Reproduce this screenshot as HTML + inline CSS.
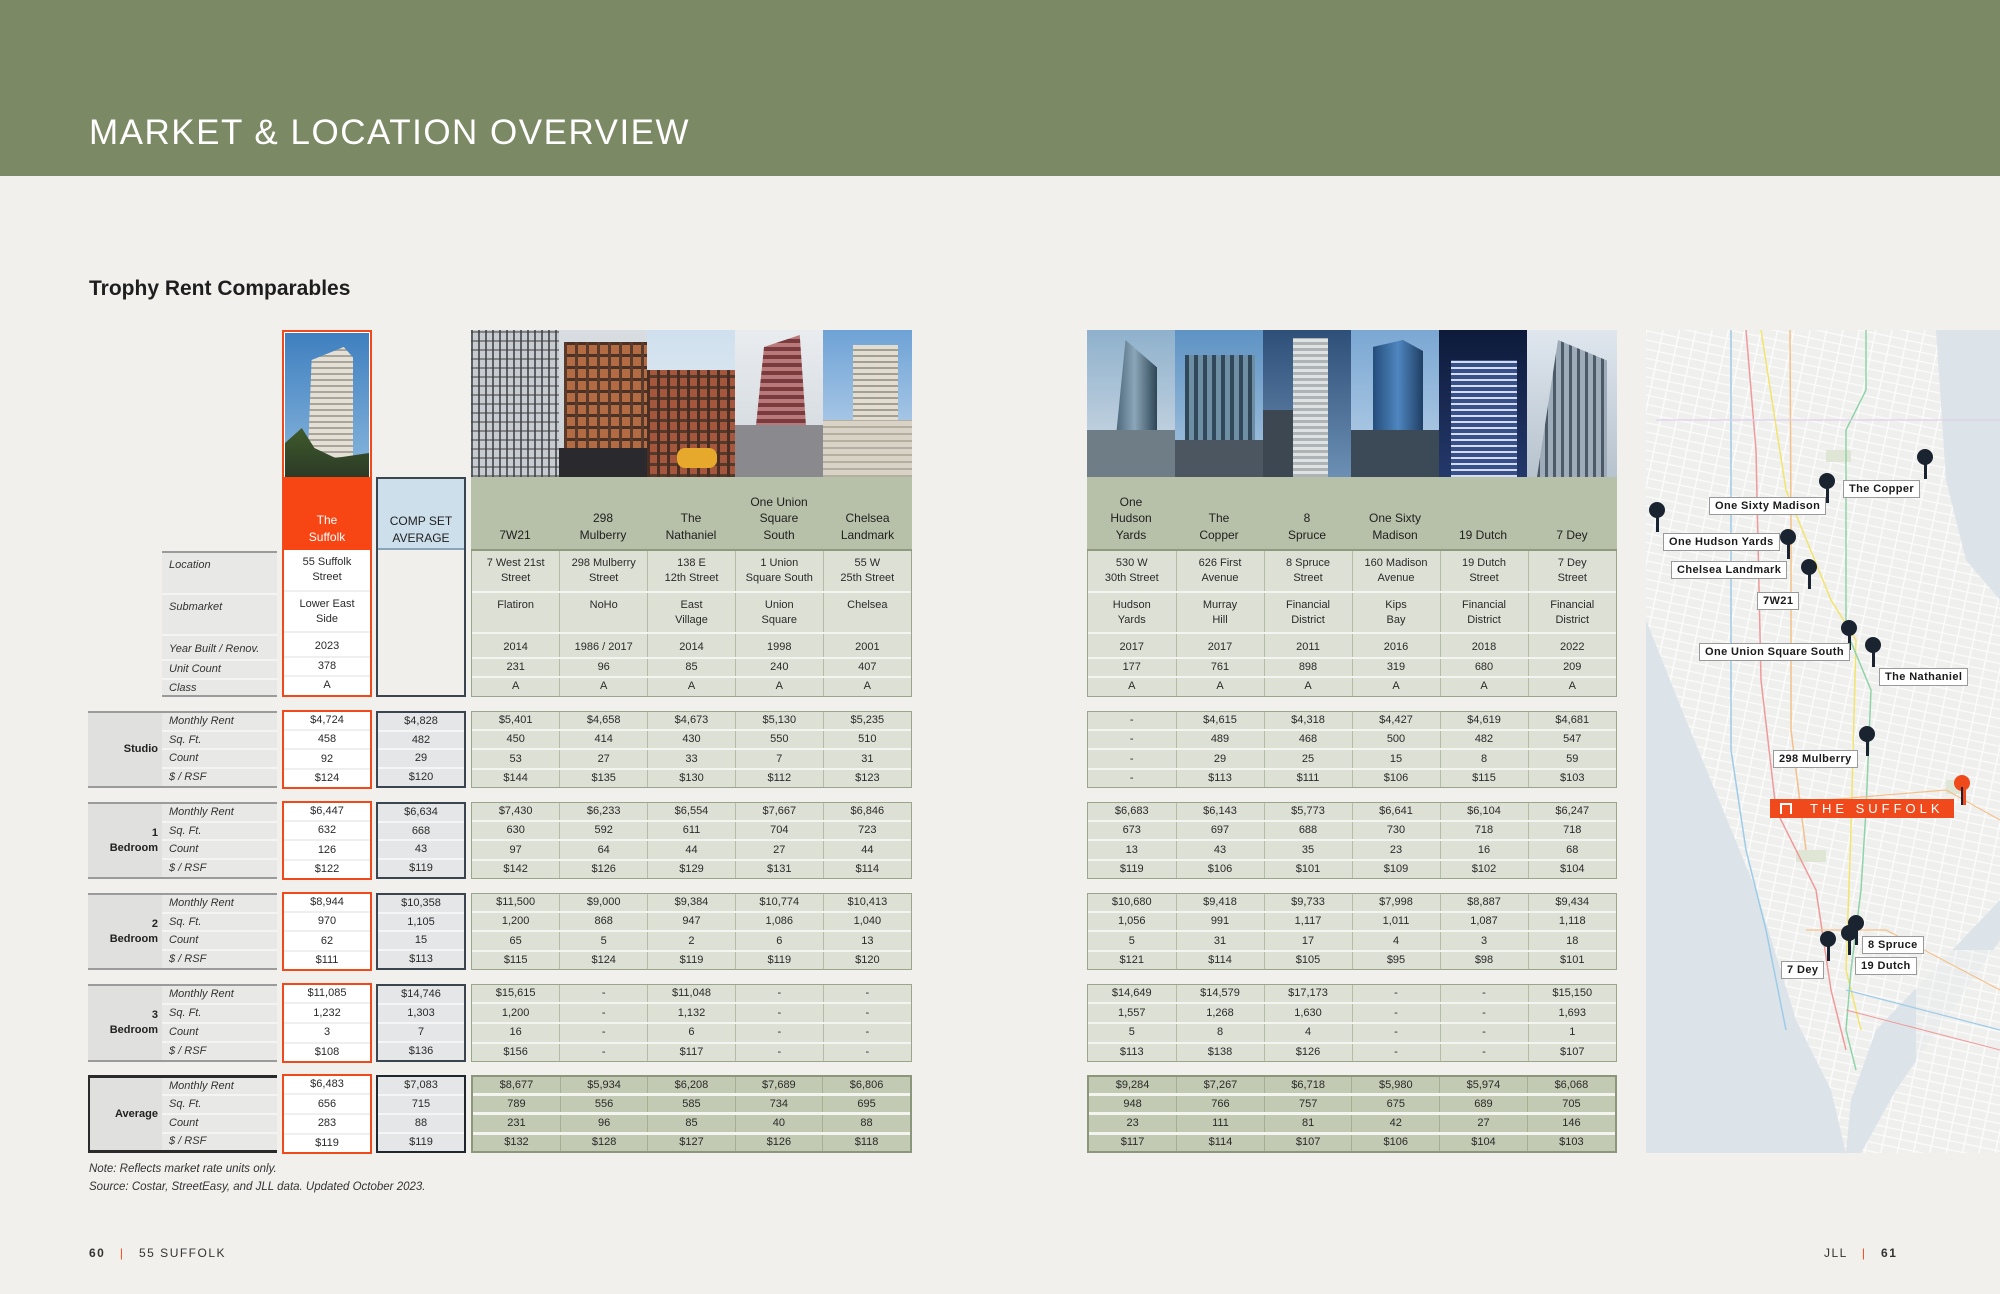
<!DOCTYPE html>
<html><head><meta charset="utf-8">
<style>
*{margin:0;padding:0;box-sizing:border-box}
body{width:2000px;height:1294px;background:#f1f0ec;font-family:"Liberation Sans",sans-serif;position:relative;overflow:hidden;color:#2a2a2a}
.hdr{position:absolute;left:0;top:0;width:2000px;height:176px;background:#7b8964}
.hdr h1{position:absolute;left:89px;top:113px;font-weight:normal;font-size:35px;letter-spacing:1.5px;color:#fff}
h2{position:absolute;left:89px;top:277px;font-size:21px;font-weight:bold;color:#1e1e1e}
.b{position:absolute}
table{border-collapse:collapse;width:100%;height:100%;table-layout:fixed}
td{text-align:center;font-size:11px;padding:0;line-height:15px;vertical-align:middle}
.g td{background:#dde0d5;border-left:1px solid #b4bca6;border-top:2px solid #f3f3f0}
.g{border:1.5px solid #9aa68b;background:#dde0d5}
.g tr:first-child td{border-top:none}
.g td:first-child{border-left:none}
.ga td{background:#c3cab4;border-left:1px solid #a4ae92;border-top:3px solid #f3f3f0}
.ga{border:2px solid #8a977a;background:#c3cab4}
.ga tr:first-child td{border-top:none}
.ga td:first-child{border-left:none}
.s{border:2.5px solid #f04a1c;background:#fff}
.s td{background:#fff;border-top:2px solid #efefed}
.s tr:first-child td{border-top:none}
.a{border:2px solid #3b4550;background:#e5e6e7}
.a td{border-top:2px solid #f5f5f5}
.a tr:first-child td{border-top:none}
.l{border-top:2px solid #9b9b9b;border-bottom:2px solid #9b9b9b;background:#e8e8e6}
.l td{text-align:left;font-style:italic;padding-left:7px;border-top:2px solid #f4f4f2;color:#333}
.l tr:first-child td{border-top:none}
.l td.cat{font-style:normal;font-weight:bold;text-align:right;padding-right:4px;padding-left:0;background:#e0e0de;border-top:none;color:#222}
.lav{border-top:3px solid #2b2b2b;border-bottom:3px solid #2b2b2b;border-left:2px solid #2b2b2b}
.top td{vertical-align:top;padding-top:5px}
.ph{position:absolute;overflow:hidden}
.gh{position:absolute;background:#b7c0a8;border-bottom:2px solid #8d9a7e}
.gh div{position:absolute;bottom:6px;text-align:center;font-size:12px;line-height:16.5px;color:#1f1f1f}
.pin{position:absolute;width:16px;height:16px;border-radius:50%;background:#1a2430}
.pin:after{content:"";position:absolute;left:7px;top:12px;width:2.5px;height:18px;background:#1a2430}
.lab{position:absolute;background:#fff;border:1.5px solid #9a9a9a;font-size:11px;font-weight:bold;letter-spacing:.4px;color:#1a1a1a;line-height:16px;padding:0 5px;white-space:nowrap}
.note{position:absolute;left:89px;font-size:11.5px;font-style:italic;color:#333}
.ft{position:absolute;top:1246px;font-size:12px;letter-spacing:1.5px;color:#333}
</style></head><body>
<div class="hdr"><h1>MARKET &amp; LOCATION OVERVIEW</h1></div>
<h2>Trophy Rent Comparables</h2>

<div class="b" style="left:282px;top:330px;width:90px;height:367px;border:2.5px solid #f04a1c;background:#fff"></div>
<div class="ph" style="left:285px;top:333px;width:84px;height:144px;background:linear-gradient(#3f7fbf,#8ab8de)">
 <div style="position:absolute;left:22px;top:14px;width:46px;height:130px;background:repeating-linear-gradient(0deg,#a9a59c 0 2px,#e4e0d6 2px 6px);clip-path:polygon(10% 10%,80% 0,100% 8%,100% 100%,0 100%)"></div>
 <div style="position:absolute;left:0;top:95px;width:84px;height:50px;background:linear-gradient(#3f5a2c,#2b3a26);clip-path:polygon(0 30%,20% 0,35% 40%,60% 60%,100% 50%,100% 100%,0 100%)"></div>
</div>
<div class="b" style="left:284px;top:477px;width:86px;height:73px;background:#f74514;color:#fff;font-size:12px;line-height:16.5px;text-align:center;padding-top:35px">The<br>Suffolk</div>
<div class="b" style="left:284px;top:550px;width:86px;height:145px">
<table class="top"><tr style="height:41px"><td>55 Suffolk<br>Street</td></tr><tr style="height:41px"><td style="border-top:2px solid #efefed">Lower East<br>Side</td></tr><tr style="height:25px"><td style="border-top:2px solid #efefed;padding-top:6px">2023</td></tr><tr style="height:19px"><td style="border-top:2px solid #efefed;padding-top:1px">378</td></tr><tr><td style="border-top:2px solid #efefed;padding-top:1px">A</td></tr></table></div>

<div class="b" style="left:376px;top:477px;width:90px;height:220px;border:2px solid #3b4550;background:#f0efeb"></div>
<div class="b" style="left:378px;top:479px;width:86px;height:71px;background:#cddfeb;border-bottom:2px solid #8aa4b8;font-size:12px;line-height:16.5px;text-align:center;padding-top:34px;color:#1f1f1f">COMP SET<br>AVERAGE</div>

<div class="b l" style="left:162px;top:551px;width:115px;height:146px">
<table class="top"><tr style="height:41px"><td>Location</td></tr><tr style="height:41px"><td>Submarket</td></tr><tr style="height:25px"><td style="padding-top:6px">Year Built / Renov.</td></tr><tr style="height:19px"><td style="padding-top:1px">Unit Count</td></tr><tr><td style="padding-top:1px">Class</td></tr></table></div>

<div class="ph" style="left:471px;top:330px;width:88px;height:147px;background:repeating-linear-gradient(90deg,#5b6066 0 2px,#c8ccd0 2px 7px),#aab;"><div style="position:absolute;inset:0;background:repeating-linear-gradient(0deg,rgba(60,60,60,.5) 0 2px,transparent 2px 9px)"></div></div>
<div class="ph" style="left:559px;top:330px;width:88px;height:147px;background:linear-gradient(#d8dde2,#c9ced2)"><div style="position:absolute;left:5px;top:12px;width:83px;height:135px;background:repeating-linear-gradient(90deg,#5a3a2a 0 3px,transparent 3px 11px),repeating-linear-gradient(0deg,#4a3226 0 3px,transparent 3px 12px),#b26b43"></div><div style="position:absolute;left:0;top:118px;width:88px;height:29px;background:#2a2a2e"></div></div>
<div class="ph" style="left:647px;top:330px;width:88px;height:147px;background:linear-gradient(#cfe0ee,#e8eef2)"><div style="position:absolute;left:0;top:40px;width:88px;height:107px;background:repeating-linear-gradient(90deg,#4a2e24 0 3px,transparent 3px 10px),repeating-linear-gradient(0deg,#553a2c 0 3px,transparent 3px 11px),#a5573e"></div><div style="position:absolute;left:30px;top:118px;width:40px;height:20px;border-radius:8px;background:#e6a92c"></div></div>
<div class="ph" style="left:735px;top:330px;width:88px;height:147px;background:linear-gradient(#e9ecef,#cfd6dc)"><div style="position:absolute;left:18px;top:5px;width:55px;height:120px;background:repeating-linear-gradient(0deg,#7a3b3e 0 4px,#b9787a 4px 8px);clip-path:polygon(20% 10%,85% 0,100% 100%,0 100%)"></div><div style="position:absolute;left:0;top:95px;width:88px;height:52px;background:#8a8a8e"></div></div>
<div class="ph" style="left:823px;top:330px;width:89px;height:147px;background:linear-gradient(#6ea2d6,#c7dbee)"><div style="position:absolute;left:30px;top:15px;width:45px;height:132px;background:repeating-linear-gradient(0deg,#a49e92 0 2px,#e2ddd1 2px 6px)"></div><div style="position:absolute;left:0;top:90px;width:89px;height:57px;background:repeating-linear-gradient(0deg,#b4ae9f 0 2px,#d8d3c6 2px 7px)"></div></div>
<div class="gh" style="left:471px;top:477px;width:441px;height:74px">
 <div style="left:0;width:88px">7W21</div><div style="left:88px;width:88px">298<br>Mulberry</div><div style="left:176px;width:88px">The<br>Nathaniel</div><div style="left:264px;width:88px">One Union<br>Square<br>South</div><div style="left:352px;width:89px">Chelsea<br>Landmark</div>
</div>
<div class="b g" style="left:471px;top:551px;width:441px;height:146px;border-top:none">
<table class="top"><tr style="height:41px"><td>7 West 21st<br>Street</td><td>298 Mulberry<br>Street</td><td>138 E<br>12th Street</td><td>1 Union<br>Square South</td><td>55 W<br>25th Street</td></tr>
<tr style="height:41px"><td>Flatiron</td><td>NoHo</td><td>East<br>Village</td><td>Union<br>Square</td><td>Chelsea</td></tr>
<tr style="height:25px"><td style="padding-top:6px">2014</td><td style="padding-top:6px">1986 / 2017</td><td style="padding-top:6px">2014</td><td style="padding-top:6px">1998</td><td style="padding-top:6px">2001</td></tr>
<tr style="height:19px"><td style="padding-top:1px">231</td><td style="padding-top:1px">96</td><td style="padding-top:1px">85</td><td style="padding-top:1px">240</td><td style="padding-top:1px">407</td></tr>
<tr><td style="padding-top:1px">A</td><td style="padding-top:1px">A</td><td style="padding-top:1px">A</td><td style="padding-top:1px">A</td><td style="padding-top:1px">A</td></tr></table></div>

<div class="ph" style="left:1087px;top:330px;width:88px;height:147px;background:linear-gradient(#8fb1cc,#d3dde6)"><div style="position:absolute;left:25px;top:10px;width:45px;height:137px;background:linear-gradient(90deg,#3f5a6c,#8aa6b8,#2f4656);clip-path:polygon(30% 0,100% 20%,100% 100%,0 100%)"></div><div style="position:absolute;left:0;top:100px;width:88px;height:47px;background:#6f7d86"></div></div>
<div class="ph" style="left:1175px;top:330px;width:88px;height:147px;background:linear-gradient(#5e93c4,#a9c6e0)"><div style="position:absolute;left:10px;top:25px;width:70px;height:122px;background:repeating-linear-gradient(90deg,#30485a 0 4px,#6d8ea3 4px 9px)"></div><div style="position:absolute;left:0;top:110px;width:88px;height:37px;background:#4b5660"></div></div>
<div class="ph" style="left:1263px;top:330px;width:88px;height:147px;background:linear-gradient(#2e4f78,#6c8fb4)"><div style="position:absolute;left:30px;top:8px;width:35px;height:139px;background:repeating-linear-gradient(0deg,#aeb3b5 0 3px,#dfe2e3 3px 6px)"></div><div style="position:absolute;left:0;top:80px;width:30px;height:67px;background:#3d4752"></div></div>
<div class="ph" style="left:1351px;top:330px;width:88px;height:147px;background:linear-gradient(#7aa7d3,#bad2e8)"><div style="position:absolute;left:22px;top:10px;width:50px;height:137px;background:linear-gradient(90deg,#244d7a,#4f86c0,#1f3e63);clip-path:polygon(0 5%,60% 0,100% 8%,100% 100%,0 100%)"></div><div style="position:absolute;left:0;top:100px;width:88px;height:47px;background:#3c4a58"></div></div>
<div class="ph" style="left:1439px;top:330px;width:88px;height:147px;background:linear-gradient(#0d1a3a,#24386a)"><div style="position:absolute;left:12px;top:30px;width:66px;height:117px;background:repeating-linear-gradient(0deg,#d5dcf0 0 2px,#37508a 2px 6px)"></div></div>
<div class="ph" style="left:1527px;top:330px;width:90px;height:147px;background:linear-gradient(#dfe6ee,#b7c3ce)"><div style="position:absolute;left:10px;top:10px;width:70px;height:137px;background:repeating-linear-gradient(90deg,#4c5a68 0 3px,#9eabb8 3px 8px);clip-path:polygon(30% 0,100% 15%,100% 100%,0 100%)"></div></div>
<div class="gh" style="left:1087px;top:477px;width:530px;height:74px">
 <div style="left:0;width:88px">One<br>Hudson<br>Yards</div><div style="left:88px;width:88px">The<br>Copper</div><div style="left:176px;width:88px">8<br>Spruce</div><div style="left:264px;width:88px">One Sixty<br>Madison</div><div style="left:352px;width:88px">19 Dutch</div><div style="left:440px;width:90px">7 Dey</div>
</div>
<div class="b g" style="left:1087px;top:551px;width:530px;height:146px;border-top:none">
<table class="top"><tr style="height:41px"><td>530 W<br>30th Street</td><td>626 First<br>Avenue</td><td>8 Spruce<br>Street</td><td>160 Madison<br>Avenue</td><td>19 Dutch<br>Street</td><td>7 Dey<br>Street</td></tr>
<tr style="height:41px"><td>Hudson<br>Yards</td><td>Murray<br>Hill</td><td>Financial<br>District</td><td>Kips<br>Bay</td><td>Financial<br>District</td><td>Financial<br>District</td></tr>
<tr style="height:25px"><td style="padding-top:6px">2017</td><td style="padding-top:6px">2017</td><td style="padding-top:6px">2011</td><td style="padding-top:6px">2016</td><td style="padding-top:6px">2018</td><td style="padding-top:6px">2022</td></tr>
<tr style="height:19px"><td style="padding-top:1px">177</td><td style="padding-top:1px">761</td><td style="padding-top:1px">898</td><td style="padding-top:1px">319</td><td style="padding-top:1px">680</td><td style="padding-top:1px">209</td></tr>
<tr><td style="padding-top:1px">A</td><td style="padding-top:1px">A</td><td style="padding-top:1px">A</td><td style="padding-top:1px">A</td><td style="padding-top:1px">A</td><td style="padding-top:1px">A</td></tr></table></div>

<div class="b l" style="left:88px;top:711px;width:189px;height:77px"><table><col style="width:74px"><col><tr><td class="cat" rowspan="4">Studio</td><td>Monthly Rent</td></tr><tr><td>Sq. Ft.</td></tr><tr><td>Count</td></tr><tr><td>$ / RSF</td></tr></table></div>
<div class="b s" style="left:282px;top:710px;width:90px;height:79px"><table><tr><td>$4,724</td></tr><tr><td>458</td></tr><tr><td>92</td></tr><tr><td>$124</td></tr></table></div>
<div class="b a" style="left:376px;top:711px;width:90px;height:77px"><table><tr><td>$4,828</td></tr><tr><td>482</td></tr><tr><td>29</td></tr><tr><td>$120</td></tr></table></div>
<div class="b g" style="left:471px;top:711px;width:441px;height:77px"><table><tr><td>$5,401</td><td>$4,658</td><td>$4,673</td><td>$5,130</td><td>$5,235</td></tr><tr><td>450</td><td>414</td><td>430</td><td>550</td><td>510</td></tr><tr><td>53</td><td>27</td><td>33</td><td>7</td><td>31</td></tr><tr><td>$144</td><td>$135</td><td>$130</td><td>$112</td><td>$123</td></tr></table></div>
<div class="b g" style="left:1087px;top:711px;width:530px;height:77px"><table><tr><td>-</td><td>$4,615</td><td>$4,318</td><td>$4,427</td><td>$4,619</td><td>$4,681</td></tr><tr><td>-</td><td>489</td><td>468</td><td>500</td><td>482</td><td>547</td></tr><tr><td>-</td><td>29</td><td>25</td><td>15</td><td>8</td><td>59</td></tr><tr><td>-</td><td>$113</td><td>$111</td><td>$106</td><td>$115</td><td>$103</td></tr></table></div>

<div class="b l" style="left:88px;top:802px;width:189px;height:77px"><table><col style="width:74px"><col><tr><td class="cat" rowspan="4">1<br>Bedroom</td><td>Monthly Rent</td></tr><tr><td>Sq. Ft.</td></tr><tr><td>Count</td></tr><tr><td>$ / RSF</td></tr></table></div>
<div class="b s" style="left:282px;top:801px;width:90px;height:79px"><table><tr><td>$6,447</td></tr><tr><td>632</td></tr><tr><td>126</td></tr><tr><td>$122</td></tr></table></div>
<div class="b a" style="left:376px;top:802px;width:90px;height:77px"><table><tr><td>$6,634</td></tr><tr><td>668</td></tr><tr><td>43</td></tr><tr><td>$119</td></tr></table></div>
<div class="b g" style="left:471px;top:802px;width:441px;height:77px"><table><tr><td>$7,430</td><td>$6,233</td><td>$6,554</td><td>$7,667</td><td>$6,846</td></tr><tr><td>630</td><td>592</td><td>611</td><td>704</td><td>723</td></tr><tr><td>97</td><td>64</td><td>44</td><td>27</td><td>44</td></tr><tr><td>$142</td><td>$126</td><td>$129</td><td>$131</td><td>$114</td></tr></table></div>
<div class="b g" style="left:1087px;top:802px;width:530px;height:77px"><table><tr><td>$6,683</td><td>$6,143</td><td>$5,773</td><td>$6,641</td><td>$6,104</td><td>$6,247</td></tr><tr><td>673</td><td>697</td><td>688</td><td>730</td><td>718</td><td>718</td></tr><tr><td>13</td><td>43</td><td>35</td><td>23</td><td>16</td><td>68</td></tr><tr><td>$119</td><td>$106</td><td>$101</td><td>$109</td><td>$102</td><td>$104</td></tr></table></div>

<div class="b l" style="left:88px;top:893px;width:189px;height:77px"><table><col style="width:74px"><col><tr><td class="cat" rowspan="4">2<br>Bedroom</td><td>Monthly Rent</td></tr><tr><td>Sq. Ft.</td></tr><tr><td>Count</td></tr><tr><td>$ / RSF</td></tr></table></div>
<div class="b s" style="left:282px;top:892px;width:90px;height:79px"><table><tr><td>$8,944</td></tr><tr><td>970</td></tr><tr><td>62</td></tr><tr><td>$111</td></tr></table></div>
<div class="b a" style="left:376px;top:893px;width:90px;height:77px"><table><tr><td>$10,358</td></tr><tr><td>1,105</td></tr><tr><td>15</td></tr><tr><td>$113</td></tr></table></div>
<div class="b g" style="left:471px;top:893px;width:441px;height:77px"><table><tr><td>$11,500</td><td>$9,000</td><td>$9,384</td><td>$10,774</td><td>$10,413</td></tr><tr><td>1,200</td><td>868</td><td>947</td><td>1,086</td><td>1,040</td></tr><tr><td>65</td><td>5</td><td>2</td><td>6</td><td>13</td></tr><tr><td>$115</td><td>$124</td><td>$119</td><td>$119</td><td>$120</td></tr></table></div>
<div class="b g" style="left:1087px;top:893px;width:530px;height:77px"><table><tr><td>$10,680</td><td>$9,418</td><td>$9,733</td><td>$7,998</td><td>$8,887</td><td>$9,434</td></tr><tr><td>1,056</td><td>991</td><td>1,117</td><td>1,011</td><td>1,087</td><td>1,118</td></tr><tr><td>5</td><td>31</td><td>17</td><td>4</td><td>3</td><td>18</td></tr><tr><td>$121</td><td>$114</td><td>$105</td><td>$95</td><td>$98</td><td>$101</td></tr></table></div>

<div class="b l" style="left:88px;top:984px;width:189px;height:78px"><table><col style="width:74px"><col><tr><td class="cat" rowspan="4">3<br>Bedroom</td><td>Monthly Rent</td></tr><tr><td>Sq. Ft.</td></tr><tr><td>Count</td></tr><tr><td>$ / RSF</td></tr></table></div>
<div class="b s" style="left:282px;top:983px;width:90px;height:80px"><table><tr><td>$11,085</td></tr><tr><td>1,232</td></tr><tr><td>3</td></tr><tr><td>$108</td></tr></table></div>
<div class="b a" style="left:376px;top:984px;width:90px;height:78px"><table><tr><td>$14,746</td></tr><tr><td>1,303</td></tr><tr><td>7</td></tr><tr><td>$136</td></tr></table></div>
<div class="b g" style="left:471px;top:984px;width:441px;height:78px"><table><tr><td>$15,615</td><td>-</td><td>$11,048</td><td>-</td><td>-</td></tr><tr><td>1,200</td><td>-</td><td>1,132</td><td>-</td><td>-</td></tr><tr><td>16</td><td>-</td><td>6</td><td>-</td><td>-</td></tr><tr><td>$156</td><td>-</td><td>$117</td><td>-</td><td>-</td></tr></table></div>
<div class="b g" style="left:1087px;top:984px;width:530px;height:78px"><table><tr><td>$14,649</td><td>$14,579</td><td>$17,173</td><td>-</td><td>-</td><td>$15,150</td></tr><tr><td>1,557</td><td>1,268</td><td>1,630</td><td>-</td><td>-</td><td>1,693</td></tr><tr><td>5</td><td>8</td><td>4</td><td>-</td><td>-</td><td>1</td></tr><tr><td>$113</td><td>$138</td><td>$126</td><td>-</td><td>-</td><td>$107</td></tr></table></div>

<div class="b l lav" style="left:88px;top:1075px;width:189px;height:78px"><table><col style="width:72px"><col><tr><td class="cat" rowspan="4">Average</td><td>Monthly Rent</td></tr><tr><td>Sq. Ft.</td></tr><tr><td>Count</td></tr><tr><td>$ / RSF</td></tr></table></div>
<div class="b s" style="left:282px;top:1074px;width:90px;height:80px"><table><tr><td>$6,483</td></tr><tr><td>656</td></tr><tr><td>283</td></tr><tr><td>$119</td></tr></table></div>
<div class="b a" style="left:376px;top:1075px;width:90px;height:78px;border-width:2.5px;border-color:#1f262e"><table><tr><td>$7,083</td></tr><tr><td>715</td></tr><tr><td>88</td></tr><tr><td>$119</td></tr></table></div>
<div class="b ga" style="left:471px;top:1075px;width:441px;height:78px"><table><tr><td>$8,677</td><td>$5,934</td><td>$6,208</td><td>$7,689</td><td>$6,806</td></tr><tr><td>789</td><td>556</td><td>585</td><td>734</td><td>695</td></tr><tr><td>231</td><td>96</td><td>85</td><td>40</td><td>88</td></tr><tr><td>$132</td><td>$128</td><td>$127</td><td>$126</td><td>$118</td></tr></table></div>
<div class="b ga" style="left:1087px;top:1075px;width:530px;height:78px"><table><tr><td>$9,284</td><td>$7,267</td><td>$6,718</td><td>$5,980</td><td>$5,974</td><td>$6,068</td></tr><tr><td>948</td><td>766</td><td>757</td><td>675</td><td>689</td><td>705</td></tr><tr><td>23</td><td>111</td><td>81</td><td>42</td><td>27</td><td>146</td></tr><tr><td>$117</td><td>$114</td><td>$107</td><td>$106</td><td>$104</td><td>$103</td></tr></table></div>

<div class="note" style="top:1163px">Note: Reflects market rate units only.</div>
<div class="note" style="top:1181px">Source: Costar, StreetEasy, and JLL data. Updated October 2023.</div>

<!-- MAP -->
<div class="b" style="left:1646px;top:330px;width:354px;height:823px;overflow:hidden;background:#f2f2f0">
<svg width="354" height="823" viewBox="0 0 354 823" style="position:absolute;left:0;top:0">
<defs>
<pattern id="st" width="16" height="9" patternUnits="userSpaceOnUse" patternTransform="rotate(12)"><rect width="16" height="9" fill="#efefed"/><rect width="16" height="1.3" fill="#fbfbfb"/><rect width="1.5" height="9" fill="#fbfbfb"/></pattern>
</defs>
<rect width="354" height="823" fill="url(#st)"/>
<polygon points="0,290 40,390 110,560 150,690 185,760 200,823 0,823" fill="#dce4e9"/>
<polygon points="290,0 354,0 354,270 320,230 300,150" fill="#dce4e9"/>
<polygon points="230,700 354,570 354,610 250,760 215,823 200,823 205,770" fill="#dce4e9"/>
<rect x="270" y="620" width="84" height="203" fill="url(#st)" opacity=".8"/>
<rect x="180" y="120" width="25" height="12" fill="#dfe6d5"/><rect x="150" y="520" width="30" height="12" fill="#dfe6d5"/><rect x="300" y="450" width="18" height="14" fill="#dfe6d5"/>
<path d="M85,0 L85,420 L100,520 L120,600 L140,700" stroke="#9dcbe8" stroke-width="1.5" fill="none"/>
<path d="M100,0 L110,120 L115,350 L130,480 L170,560 L185,660 L200,720" stroke="#ef9a9a" stroke-width="1.5" fill="none"/>
<path d="M115,0 L140,160 L185,270 L210,310 L205,500 L200,640 L215,700" stroke="#f2e46e" stroke-width="1.5" fill="none"/>
<path d="M144,0 L145,200 L145,400 L160,520" stroke="#f4c08a" stroke-width="1.5" fill="none"/>
<path d="M220,0 L220,60 L200,100 L200,300 L225,360 L220,480 L215,560 L205,640 L200,700 L210,740" stroke="#8fd3a8" stroke-width="1.5" fill="none"/>
<path d="M180,470 L300,460 L354,490" stroke="#f4c08a" stroke-width="1.2" fill="none"/>
<path d="M160,600 L240,600 L354,660" stroke="#f4c08a" stroke-width="1.2" fill="none"/>
<path d="M10,90 L354,90" stroke="#e0cfe8" stroke-width="1.2" fill="none"/>
<path d="M200,660 L354,700" stroke="#9dcbe8" stroke-width="1.2" fill="none"/>
<path d="M200,680 L354,720" stroke="#ef9a9a" stroke-width="1" fill="none"/>
</svg>
</div>
<div class="pin" style="left:1917px;top:449px"></div><div class="lab" style="left:1843px;top:480px">The Copper</div>
<div class="pin" style="left:1819px;top:473px"></div><div class="lab" style="left:1709px;top:497px">One Sixty Madison</div>
<div class="pin" style="left:1649px;top:502px"></div><div class="lab" style="left:1663px;top:533px">One Hudson Yards</div>
<div class="pin" style="left:1780px;top:529px"></div><div class="lab" style="left:1671px;top:561px">Chelsea Landmark</div>
<div class="pin" style="left:1801px;top:559px"></div><div class="lab" style="left:1757px;top:592px">7W21</div>
<div class="pin" style="left:1841px;top:620px"></div><div class="lab" style="left:1699px;top:643px">One Union Square South</div>
<div class="pin" style="left:1865px;top:637px"></div><div class="lab" style="left:1879px;top:668px">The Nathaniel</div>
<div class="pin" style="left:1859px;top:726px"></div><div class="lab" style="left:1773px;top:750px">298 Mulberry</div>
<div class="pin" style="left:1954px;top:775px;background:#f04a1c"></div>
<div style="position:absolute;left:1963px;top:787px;width:2.5px;height:18px;background:#f04a1c"></div>
<div style="position:absolute;left:1770px;top:799px;width:184px;height:19px;background:#f04a1c;color:#fff;font-size:13px;letter-spacing:4px;line-height:19px;padding-left:40px;white-space:nowrap;overflow:hidden">THE SUFFOLK</div>
<div style="position:absolute;left:1780px;top:803px;width:12px;height:11px;border:2px solid #fff;border-bottom:none"></div>
<div class="pin" style="left:1848px;top:915px"></div><div class="lab" style="left:1862px;top:936px">8 Spruce</div>
<div class="pin" style="left:1841px;top:925px"></div><div class="lab" style="left:1855px;top:957px">19 Dutch</div>
<div class="pin" style="left:1820px;top:931px"></div><div class="lab" style="left:1781px;top:961px">7 Dey</div>

<div class="ft" style="left:89px"><b>60</b> &nbsp;&nbsp;<span style="color:#f04a1c">|</span>&nbsp;&nbsp; 55 SUFFOLK</div>
<div class="ft" style="left:1824px">JLL &nbsp;&nbsp;<span style="color:#f04a1c">|</span>&nbsp;&nbsp; <b>61</b></div>
</body></html>
